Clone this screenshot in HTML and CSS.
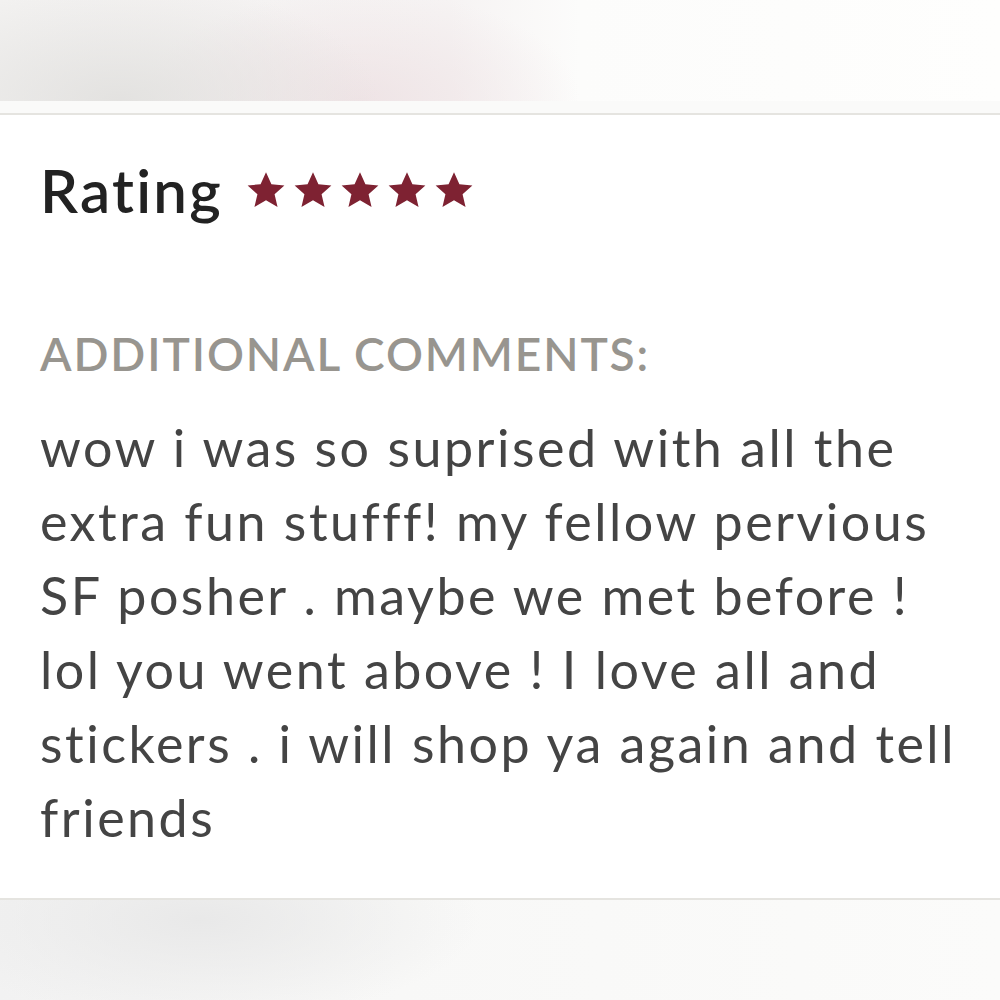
FILE: index.html
```html
<!DOCTYPE html>
<html lang="en">
<head>
    <meta charset="UTF-8">
    <meta name="viewport" content="width=device-width, initial-scale=1.0">
    <title>Review</title>
    <link rel="stylesheet" href="styles.css">
</head>
<body>
    <!-- Blurred page content above the review card -->
    <div class="haze haze-top"></div>
    <div class="strip"></div>

    <div class="review">
        <div class="rating">
            <h1>Rating</h1>
            <div class="stars">
                <svg viewBox="0 0 24 24"><path d="M12 1.8l3.1 6.9 7.4.7-5.6 5 1.7 7.3L12 17.9l-6.6 3.8 1.7-7.3-5.6-5 7.4-.7z"/></svg>
                <svg viewBox="0 0 24 24"><path d="M12 1.8l3.1 6.9 7.4.7-5.6 5 1.7 7.3L12 17.9l-6.6 3.8 1.7-7.3-5.6-5 7.4-.7z"/></svg>
                <svg viewBox="0 0 24 24"><path d="M12 1.8l3.1 6.9 7.4.7-5.6 5 1.7 7.3L12 17.9l-6.6 3.8 1.7-7.3-5.6-5 7.4-.7z"/></svg>
                <svg viewBox="0 0 24 24"><path d="M12 1.8l3.1 6.9 7.4.7-5.6 5 1.7 7.3L12 17.9l-6.6 3.8 1.7-7.3-5.6-5 7.4-.7z"/></svg>
                <svg viewBox="0 0 24 24"><path d="M12 1.8l3.1 6.9 7.4.7-5.6 5 1.7 7.3L12 17.9l-6.6 3.8 1.7-7.3-5.6-5 7.4-.7z"/></svg>
            </div>
        </div>

        <h2>ADDITIONAL COMMENTS:</h2>
        <p class="comment">wow i was so suprised with all the extra fun stufff! my fellow pervious SF posher . maybe we met before ! lol you went above ! I love all and stickers . i will shop ya again and tell friends</p>
    </div>

    <div class="haze haze-bottom"></div>
</body>
</html>
```

FILE: styles.css
```css
body {
    margin: 0;
    font-family: Lato, "Open Sans", sans-serif;
    font-variant-ligatures: none;
    background: #fff;
    width: 1000px;
    height: 1000px;
    overflow: hidden;
}
.haze {
    width: 100%;
}
.haze-top {
    height: 101px;
    background:
        radial-gradient(ellipse 260px 120px at 120px 100px, rgba(225, 224, 222, 0.9), transparent),
        radial-gradient(ellipse 220px 110px at 360px 100px, rgba(238, 226, 228, 0.9), transparent),
        linear-gradient(to right, #f3f2f1, #f6f3f3 45%, #fcfcfb 58%, #fefefd);
}
.strip {
    height: 12px;
    background-color: #fafaf9;
    border-bottom: 2px solid #e5e4e0;
}
.review {
    height: 783px;
    padding-left: 40px;
    box-sizing: border-box;
    padding-top: 45px;
}
.rating {
    display: flex;
    align-items: center;
    gap: 22px;
}
h1 {
    margin: 0;
    font-size: 60px;
    font-weight: 600;
    letter-spacing: 2.3px;
    color: #222;
    line-height: 1;
}
.stars {
    display: flex;
    gap: 5px;
}
.stars svg {
    width: 42px;
    height: 42px;
    fill: #7e2232;
}
h2 {
    margin: 111px 0 0;
    font-size: 46px;
    font-weight: 600;
    letter-spacing: 1.9px;
    color: #98958f;
    line-height: 1;
}
.comment {
    margin: 33px 0 0;
    width: 920px;
    font-size: 52px;
    letter-spacing: 2.5px;
    line-height: 74px;
    color: #444;
}
.haze-bottom {
    height: 101px;
    border-top: 2px solid #e5e4e0;
    background:
        radial-gradient(ellipse 280px 100px at 200px 20px, rgba(232, 232, 232, 0.95), transparent),
        linear-gradient(to right, #f2f2f2, #f8f8f7 40%, #fafaf9 80%, #fbfbfa);
}
```
